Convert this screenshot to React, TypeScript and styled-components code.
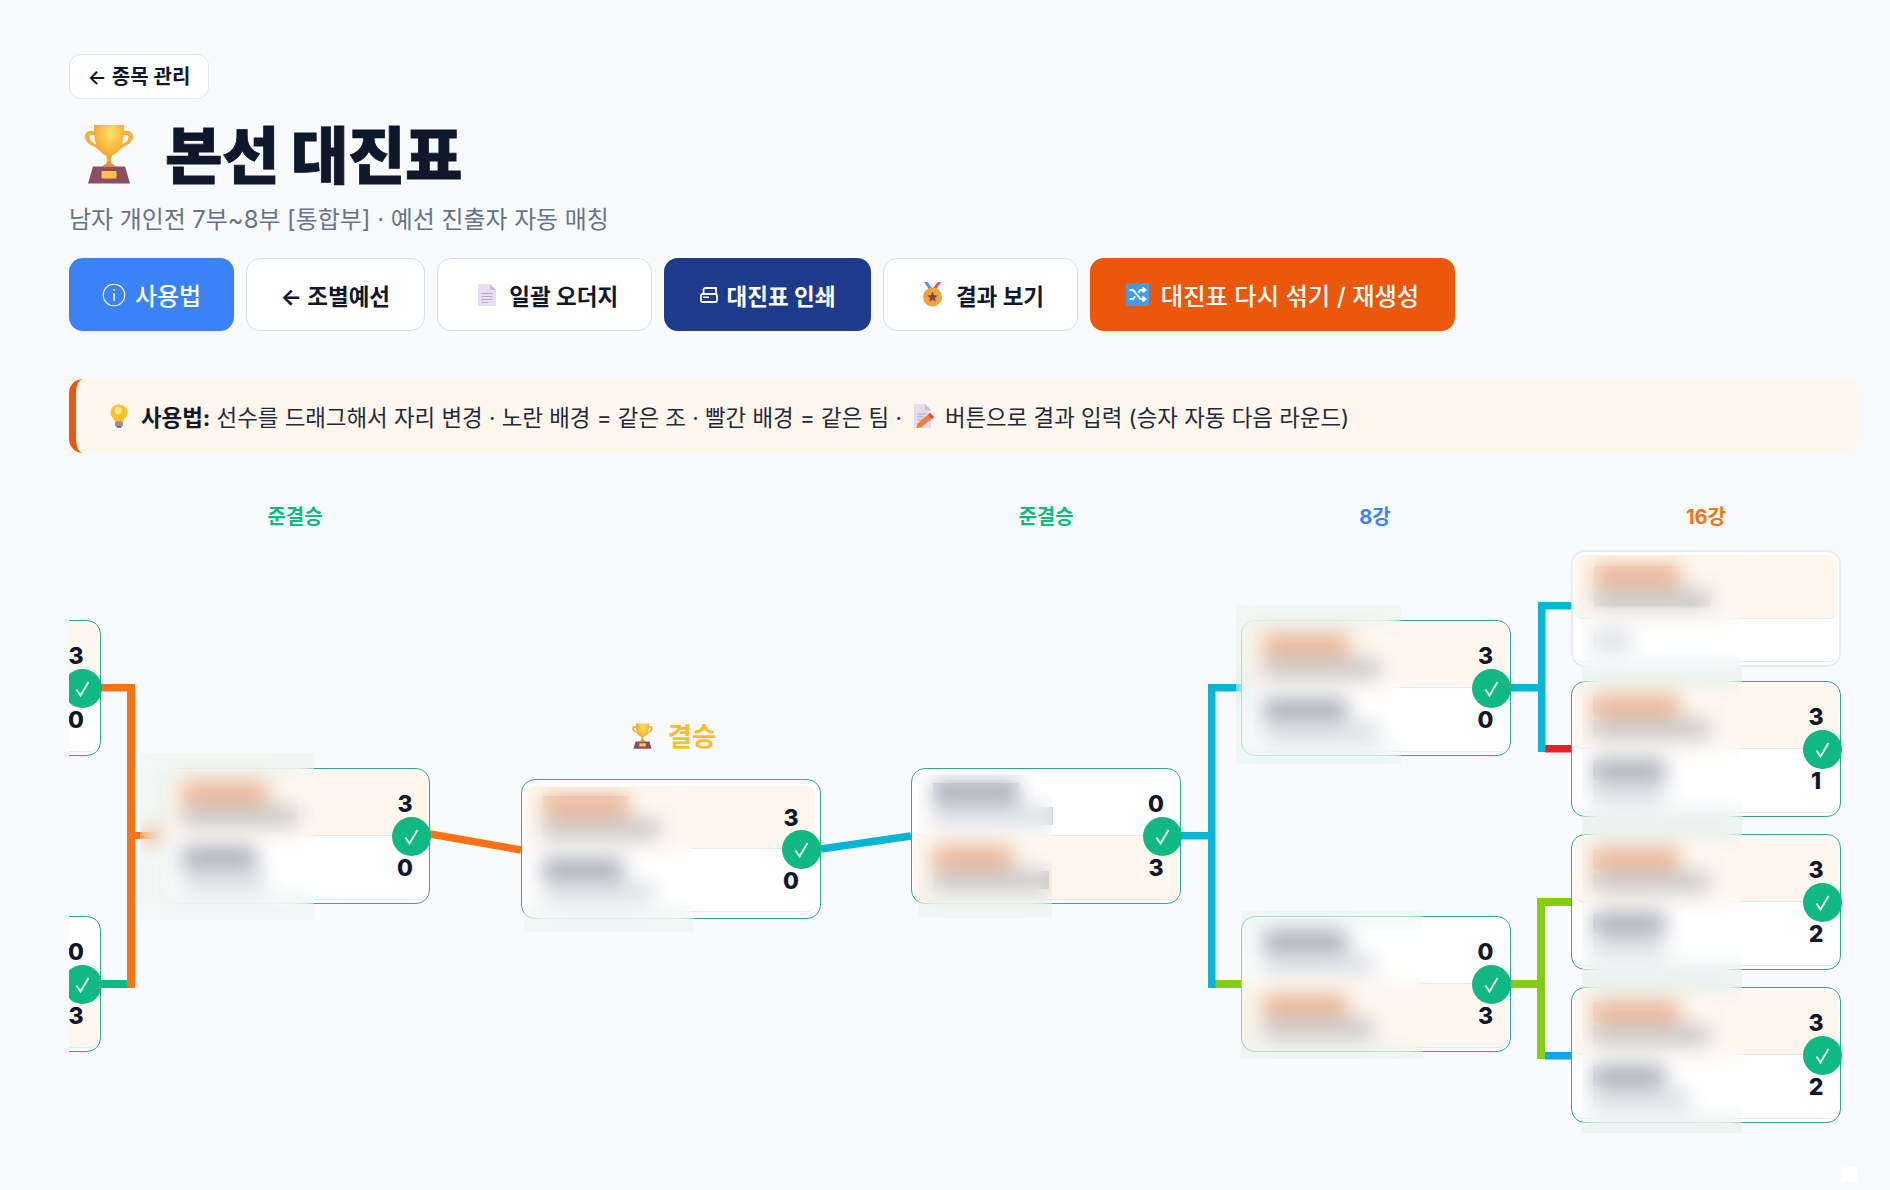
import React from 'react';
import styled, { createGlobalStyle } from 'styled-components';

const GlobalStyle = createGlobalStyle`
  html, body {
    margin: 0;
    padding: 0;
    background: #f8fafc;
  }
  * {
    box-sizing: border-box;
  }
`;

const Page = styled.div`
  width: 1890px;
  height: 1190px;
  padding: 54px 33px 0 69px;
  overflow: hidden;
  position: relative;
  background: #f8fafc;
  color: #0f172a;
  font-family: Inter, "Noto Sans CJK KR", sans-serif;
`;

const BackLink = styled.a`
  display: flex;
  align-items: center;
  justify-content: center;
  width: 140px;
  height: 45px;
  padding-bottom: 2px;
  background: #fff;
  border: 1.5px solid #e2e8f0;
  border-radius: 12px;
  font-size: 20px;
  font-weight: 600;
  color: #0f172a;
  white-space: nowrap;
`;

const Title = styled.h1`
  display: flex;
  align-items: center;
  gap: 32px;
  height: 70px;
  margin: 22px 0 0 16px;
  font-size: 62.5px;
  font-weight: 900;
  letter-spacing: -0.5px;
  line-height: 70px;
  color: #0f172a;
  -webkit-text-stroke: 0.8px #0f172a;
`;

const TitleIcon = styled.span`
  display: flex;
  margin-bottom: 4px;
`;

const Subtitle = styled.p`
  margin: 11px 0 0;
  height: 36px;
  font-size: 23.9px;
  line-height: 36px;
  color: #64748b;
`;

const Toolbar = styled.div`
  display: flex;
  gap: 12px;
  margin-top: 20px;
`;

const ToolButton = styled.button<{ $kind: 'info' | 'plain' | 'navy' | 'orange'; $w: number; $pl?: number }>`
  display: flex;
  align-items: center;
  justify-content: center;
  gap: ${(p) => (p.$kind === 'plain' ? 13 : p.$kind === 'orange' ? 12 : 9)}px;
  width: ${(p) => p.$w}px;
  height: 73px;
  padding: 0 0 0 ${(p) => p.$pl ?? 0}px;
  border-radius: 14px;
  font-family: inherit;
  font-size: ${(p) => (p.$kind === 'info' ? 24 : p.$kind === 'orange' ? 24.3 : 22.5)}px;
  font-weight: ${(p) => (p.$kind === 'info' || p.$kind === 'orange' ? 500 : 700)};
  white-space: nowrap;
  color: ${(p) => (p.$kind === 'plain' ? '#0f172a' : '#fff')};
  border: ${(p) => (p.$kind === 'plain' ? '1.5px solid #d9e0e9' : 'none')};
  background: ${(p) =>
    p.$kind === 'info' ? '#3b82f6' : p.$kind === 'navy' ? '#1e3a8a' : p.$kind === 'orange' ? '#ea580c' : '#fff'};
`;

const Notice = styled.div`
  display: flex;
  align-items: center;
  gap: 13px;
  height: 74px;
  margin-top: 48px;
  padding-left: 34px;
  background: #fff7ed;
  border-left: 7px solid #ea580c;
  border-radius: 14px;
  font-size: 22.4px;
  white-space: nowrap;
  color: #1e293b;

  b {
    font-weight: 700;
    color: #0f172a;
  }
`;

const NoticeText = styled.span`
  display: inline-flex;
  align-items: center;
  gap: 11px;
`;

const Canvas = styled.div`
  position: relative;
  height: 720px;
  margin-top: 17px;
  overflow: hidden;
`;

const Wires = styled.svg`
  position: absolute;
  left: 0;
  top: 0;
`;

const RoundLabel = styled.div<{ $x: number; $color: string }>`
  position: absolute;
  left: ${(p) => p.$x}px;
  top: 34px;
  width: 270px;
  text-align: center;
  font-size: 20px;
  font-weight: 700;
  line-height: 26px;
  color: ${(p) => p.$color};
`;

const FinalLabel = styled.div`
  position: absolute;
  left: 455px;
  top: 248px;
  width: 300px;
  display: flex;
  align-items: center;
  justify-content: center;
  gap: 15px;
  font-size: 26.5px;
  font-weight: 700;
  line-height: 36px;
  color: #fbbf24;
`;

const Card = styled.div<{ $x: number; $y: number; $w: number; $bye?: boolean; $final?: boolean }>`
  position: absolute;
  left: ${(p) => p.$x}px;
  top: ${(p) => p.$y}px;
  width: ${(p) => p.$w}px;
  display: flex;
  flex-direction: column;
  gap: ${(p) => (p.$bye ? 2 : 0)}px;
  padding: ${(p) => (p.$final ? '6px 5px' : '3px 2px')};
  background: #fff;
  border: ${(p) => (p.$bye ? '2.5px solid #e8edf5' : '1.5px solid #34a98a')};
  border-radius: 14px;
`;

const Row = styled.div<{ $win?: boolean; $short?: boolean; $final?: boolean }>`
  display: flex;
  align-items: center;
  justify-content: space-between;
  height: ${(p) => (p.$short ? 41 : p.$final ? 63 : 64)}px;
  padding: 0 ${(p) => (p.$final ? 15 : 13)}px 0 ${(p) => (p.$final ? 16 : 19)}px;
  background: ${(p) => (p.$win ? '#fff7ed' : '#fff')};
  border-bottom: 1.5px solid #e2e8f0;
  border-radius: 8px;
`;

const Names = styled.div`
  display: flex;
  flex-direction: column;
  gap: 4px;
`;

const NameBar = styled.div<{ $w: number; $win?: boolean }>`
  width: ${(p) => p.$w}px;
  height: 20px;
  background: ${(p) => (p.$win ? '#e6ad8c' : '#a3a7b1')};
`;

const SubBar = styled.div<{ $w: number; $win?: boolean }>`
  width: ${(p) => p.$w}px;
  height: 18px;
  background: ${(p) => (p.$win ? '#c2c2c2' : '#d8dbe0')};
`;

const Score = styled.span`
  width: 18px;
  margin-top: 2px;
  text-align: center;
  font-size: 23px;
  font-weight: 800;
  line-height: 1;
  color: #0f172a;
`;

const CheckBadge = styled.span<{ $final?: boolean }>`
  position: absolute;
  right: ${(p) => (p.$final ? -0.5 : -1.5)}px;
  top: 50%;
  width: 39px;
  height: 39px;
  margin-top: -19.5px;
  display: flex;
  align-items: center;
  justify-content: center;
  background: #10b981;
  border-radius: 50%;
`;

const BlurPatch = styled.div<{ $x: number; $y: number; $w: number; $h: number }>`
  position: absolute;
  left: ${(p) => p.$x}px;
  top: ${(p) => p.$y}px;
  width: ${(p) => p.$w}px;
  height: ${(p) => p.$h}px;
  backdrop-filter: blur(10px);
`;

const CornerMark = styled.div`
  position: absolute;
  right: 33px;
  bottom: 8px;
  width: 15px;
  height: 15px;
  background: #fff;
`;

const Trophy = ({ w, h, id }: { w: number; h: number; id: string }) => (
  <svg width={w} height={h} viewBox="0 0 48 60" style={{ flex: 'none' }}>
    <defs>
      <radialGradient id={id} cx="0.55" cy="0.2" r="0.8">
        <stop offset="0" stopColor="#ffe36a" />
        <stop offset="0.55" stopColor="#f9b53a" />
        <stop offset="1" stopColor="#ee8a2c" />
      </radialGradient>
    </defs>
    <path
      d="M10 7H5C1.5 7 0 10 0 12.5 0 17 3.5 20.5 9 22.5L14 26 15 22C10 20 4.5 17.5 4.5 13 4.5 11.5 6 11 10 11ZM38 7H43C46.5 7 48 10 48 12.5 48 17 44.500 20.500 39 22.500L34 26 33 22C38 20 43.500 17.500 43.500 13 43.500 11.500 42 11 38 11Z"
      fill="#f5b043"
    />
    <path d="M9 1H39C39.500 16 37 28 27 31.500L25.500 36C26 40 28.500 41 32 42.500H16C19.500 41 22 40 22.500 36L21 31.500C11 28 8.500 16 9 1Z" fill={`url(#${id})`} />
    <path d="M8 42.500H40L45 59.500H3Z" fill="#8c4f5e" />
    <rect x="16.500" y="47" width="15" height="7.500" rx="1" fill="#ffc24d" />
  </svg>
);

const Bulb = () => (
  <svg width="18" height="24" viewBox="0 0 18 24">
    <path d="M9 0.500C4 0.500 0.500 4.200 0.500 8.500 0.500 12.500 4 14.500 5 18H13C14 14.500 17.500 12.500 17.500 8.500 17.500 4.200 14 0.500 9 0.500Z" fill="#fbc02d" />
    <ellipse cx="8" cy="6.500" rx="3.500" ry="4" fill="#ffe98a" />
    <rect x="5" y="17.500" width="8" height="5" rx="1.200" fill="#a08aa6" />
    <rect x="6.500" y="22" width="5" height="1.800" rx="0.900" fill="#6f5f7a" />
  </svg>
);

const DocIcon = () => (
  <svg width="18" height="22" viewBox="0 0 18 22">
    <path d="M0 0H12L18 6V22H0Z" fill="#e6def0" />
    <path d="M12 0L18 6H12Z" fill="#c9bdd8" />
    <path d="M3.500 9.500H14.500M3.500 12.500H14.500M3.500 15.500H14.500M3.500 18.500H10" stroke="#b7aac8" strokeWidth="1" />
  </svg>
);

const PrinterIcon = () => (
  <svg width="18" height="16" viewBox="0 0 18 16" fill="none" stroke="#fff" strokeWidth="1.800">
    <path d="M3.500 7V3C3.500 1.700 4.200 1 5.500 1H16V7" />
    <rect x="1" y="7" width="16" height="8" rx="1.500" />
    <rect x="3" y="9.500" width="6" height="1.500" fill="#fff" stroke="none" />
  </svg>
);

const MedalIcon = () => (
  <svg width="21" height="25" viewBox="0 0 21 25">
    <path d="M2 0L8 9H12L5.500 0Z" fill="#5a8fe0" />
    <path d="M19 0L13 9H9L15.500 0Z" fill="#e0566a" />
    <path d="M7 0L10.500 6 14 0H12L10.500 3 9 0Z" fill="#f4f0f6" />
    <circle cx="10.500" cy="15" r="9.500" fill="#f4a23c" />
    <path d="M10.500 9.800L12 13.300 15.700 13.600 12.900 16 13.800 19.700 10.500 17.700 7.200 19.700 8.100 16 5.300 13.600 9 13.300Z" fill="#7a4a52" />
  </svg>
);

const ShuffleIcon = () => (
  <svg width="23" height="23" viewBox="0 0 23 23">
    <rect width="23" height="23" rx="2.500" fill="#3f9cf0" />
    <path
      d="M3.500 7H7L14.500 16H18M3.500 16H7L9.200 13.400M12.300 9.600L14.500 7H18M16.500 4.500L19.500 7 16.500 9.500M16.500 13.500L19.500 16 16.500 18.500"
      fill="none"
      stroke="#fff"
      strokeWidth="1.900"
    />
  </svg>
);

const MemoIcon = () => (
  <svg width="21" height="24" viewBox="0 0 21 24">
    <path d="M1 0H12L18 6V24H1Z" fill="#e3dcec" />
    <path d="M12 0L18 6H12Z" fill="#c9bdd8" />
    <path d="M4 10H14M4 13H13M4 16H10" stroke="#b7aac8" strokeWidth="1" />
    <path d="M17 9L21 13 8 23.500 3.500 24 4.500 19.500Z" fill="#f0803a" />
    <path d="M17 9L21 13 19 15 15 11Z" fill="#e0455a" />
  </svg>
);

const InfoIcon = () => (
  <svg width="24" height="24" viewBox="0 0 20 20" fill="none" stroke="#fff" strokeWidth="0.900">
    <circle cx="10" cy="10" r="9" />
    <path d="M10 8.500V15" strokeWidth="1.300" />
    <circle cx="10" cy="5.800" r="0.900" fill="#fff" stroke="none" />
  </svg>
);

const Tick = () => (
  <svg width="15" height="17" viewBox="0 0 15 17" fill="none">
    <path d="M1.500 9.500L5.500 15.500 13.500 2" stroke="#e9fbf4" strokeWidth="1.900" />
  </svg>
);

type Wire = [number, number, number, number, string];

const ORANGE = '#f97316';
const CYAN = '#06b6d4';
const LIME = '#84cc16';

const wires: Wire[] = [
  [31, 510, 28, 8, '#10b981'],
  [31, 214, 28, 7.5, ORANGE],
  [58, 214, 8, 304, ORANGE],
  [66, 362, 30, 7, ORANGE],
  [1111, 362, 28, 7.5, CYAN],
  [1146, 510, 26, 8, LIME],
  [1139, 214, 7.5, 304, CYAN],
  [1146, 214, 26, 7.5, CYAN],
  [1441, 214, 28, 7.5, CYAN],
  [1476, 275, 26, 7.5, '#dc2626'],
  [1469, 132, 7.5, 150, CYAN],
  [1476, 132, 26, 7.5, CYAN],
  [1441, 510, 27, 8, LIME],
  [1476, 582, 26, 7.5, '#0ea5e9'],
  [1468, 428, 8, 161, LIME],
  [1476, 428, 26, 8, LIME],
];

type Player = { name: number; sub: number; score?: number; win?: boolean };
type Match = { x: number; y: number; w?: number; final?: boolean; top: Player; bottom: Player };

const matches: Match[] = [
  { x: -238, y: 150, top: { name: 86, sub: 116, score: 3, win: true }, bottom: { name: 74, sub: 84, score: 0 } },
  { x: -238, y: 446, top: { name: 74, sub: 84, score: 0 }, bottom: { name: 86, sub: 116, score: 3, win: true } },
  { x: 91, y: 298, top: { name: 86, sub: 116, score: 3, win: true }, bottom: { name: 74, sub: 84, score: 0 } },
  { x: 452, y: 309, w: 300, final: true, top: { name: 86, sub: 116, score: 3, win: true }, bottom: { name: 80, sub: 110, score: 0 } },
  { x: 842, y: 298, top: { name: 86, sub: 120, score: 0 }, bottom: { name: 80, sub: 116, score: 3, win: true } },
  { x: 1171.500, y: 150, top: { name: 86, sub: 116, score: 3, win: true }, bottom: { name: 84, sub: 116, score: 0 } },
  { x: 1171.500, y: 446, top: { name: 84, sub: 110, score: 0 }, bottom: { name: 84, sub: 110, score: 3, win: true } },
  { x: 1502, y: 211, top: { name: 86, sub: 116, score: 3, win: true }, bottom: { name: 72, sub: 72, score: 1 } },
  { x: 1502, y: 364, top: { name: 86, sub: 116, score: 3, win: true }, bottom: { name: 72, sub: 72, score: 2 } },
  { x: 1502, y: 517, top: { name: 86, sub: 116, score: 3, win: true }, bottom: { name: 72, sub: 96, score: 2 } },
];

// x, y, w, h of the redaction patches and the tint that shows in their gaps
const patches: [number, number, number, number, string][] = [
  [71, 283, 174, 167, '#f3f8f7'],
  [455, 317, 170, 145, '#f3f8f7'],
  [849, 304, 134, 144, '#f3f8f7'],
  [1167, 136, 165, 158, '#f3f8f7'],
  [1172, 441, 182, 148, '#f3f8f7'],
  [1513, 136, 160, 527, '#eef5f3'],
];

const PlayerRow = ({ p, final }: { p: Player; final?: boolean }) => (
  <Row $win={p.win} $final={final}>
    <Names>
      <NameBar $w={p.name} $win={p.win} />
      <SubBar $w={p.sub} $win={p.win} />
    </Names>
    <Score>{p.score}</Score>
  </Row>
);

export default function App() {
  return (
    <Page>
      <GlobalStyle />
      <BackLink>← 종목 관리</BackLink>
      <Title>
        <TitleIcon>
          <Trophy w={48} h={60} id="cup-title" />
        </TitleIcon>
        본선 대진표
      </Title>
      <Subtitle>남자 개인전 7부~8부 [통합부] · 예선 진출자 자동 매칭</Subtitle>
      <Toolbar>
        <ToolButton $kind="info" $w={165}>
          <InfoIcon />
          사용법
        </ToolButton>
        <ToolButton $kind="plain" $w={178.5}>← 조별예선</ToolButton>
        <ToolButton $kind="plain" $w={215.5} $pl={8}>
          <DocIcon />
          일괄 오더지
        </ToolButton>
        <ToolButton $kind="navy" $w={207}>
          <PrinterIcon />
          대진표 인쇄
        </ToolButton>
        <ToolButton $kind="plain" $w={195} $pl={5}>
          <MedalIcon />
          결과 보기
        </ToolButton>
        <ToolButton $kind="orange" $w={365}>
          <ShuffleIcon />
          대진표 다시 섞기 / 재생성
        </ToolButton>
      </Toolbar>
      <Notice>
        <Bulb />
        <NoticeText>
          <span><b>사용법:</b> 선수를 드래그해서 자리 변경 · 노란 배경 = 같은 조 · 빨간 배경 = 같은 팀 ·</span>
          <MemoIcon />
          <span>버튼으로 결과 입력 (승자 자동 다음 라운드)</span>
        </NoticeText>
      </Notice>
      <Canvas>
        <Wires width="1788" height="720">
          {patches.map(([x, y, w, h, c], i) => (
            <rect key={i} x={x} y={y} width={w} height={h} fill={c} />
          ))}
          {wires.map(([x, y, w, h, c], i) => (
            <rect key={i} x={x} y={y} width={w} height={h} fill={c} />
          ))}
          <line x1="361" y1="364" x2="452" y2="380" stroke={ORANGE} strokeWidth="7.500" />
          <line x1="752" y1="379" x2="842" y2="366" stroke={CYAN} strokeWidth="7.500" />
        </Wires>

        <RoundLabel $x={91} $color="#10b981">준결승</RoundLabel>
        <RoundLabel $x={842} $color="#10b981">준결승</RoundLabel>
        <RoundLabel $x={1171} $color="#3b82f6">8강</RoundLabel>
        <RoundLabel $x={1502} $color="#f97316">16강</RoundLabel>
        <FinalLabel>
          <Trophy w={21} h={26} id="cup-final" />
          결승
        </FinalLabel>

        <Card $x={1502} $y={80} $w={270} $bye>
          <Row $win>
            <Names>
              <NameBar $w={86} $win />
              <SubBar $w={116} $win />
            </Names>
          </Row>
          <Row $short>
            <Names>
              <SubBar $w={36} />
            </Names>
          </Row>
        </Card>
        {matches.map((m, i) => (
          <Card key={i} $x={m.x} $y={m.y} $w={m.w ?? 270} $final={m.final}>
            <PlayerRow p={m.top} final={m.final} />
            <PlayerRow p={m.bottom} final={m.final} />
            <CheckBadge $final={m.final}>
              <Tick />
            </CheckBadge>
          </Card>
        ))}

        <BlurPatch $x={1509} $y={85} $w={175} $h={60} />
        {patches.map(([x, y, w, h], i) => (
          <BlurPatch key={i} $x={x} $y={y} $w={w} $h={h} />
        ))}
      </Canvas>
      <CornerMark />
    </Page>
  );
}
